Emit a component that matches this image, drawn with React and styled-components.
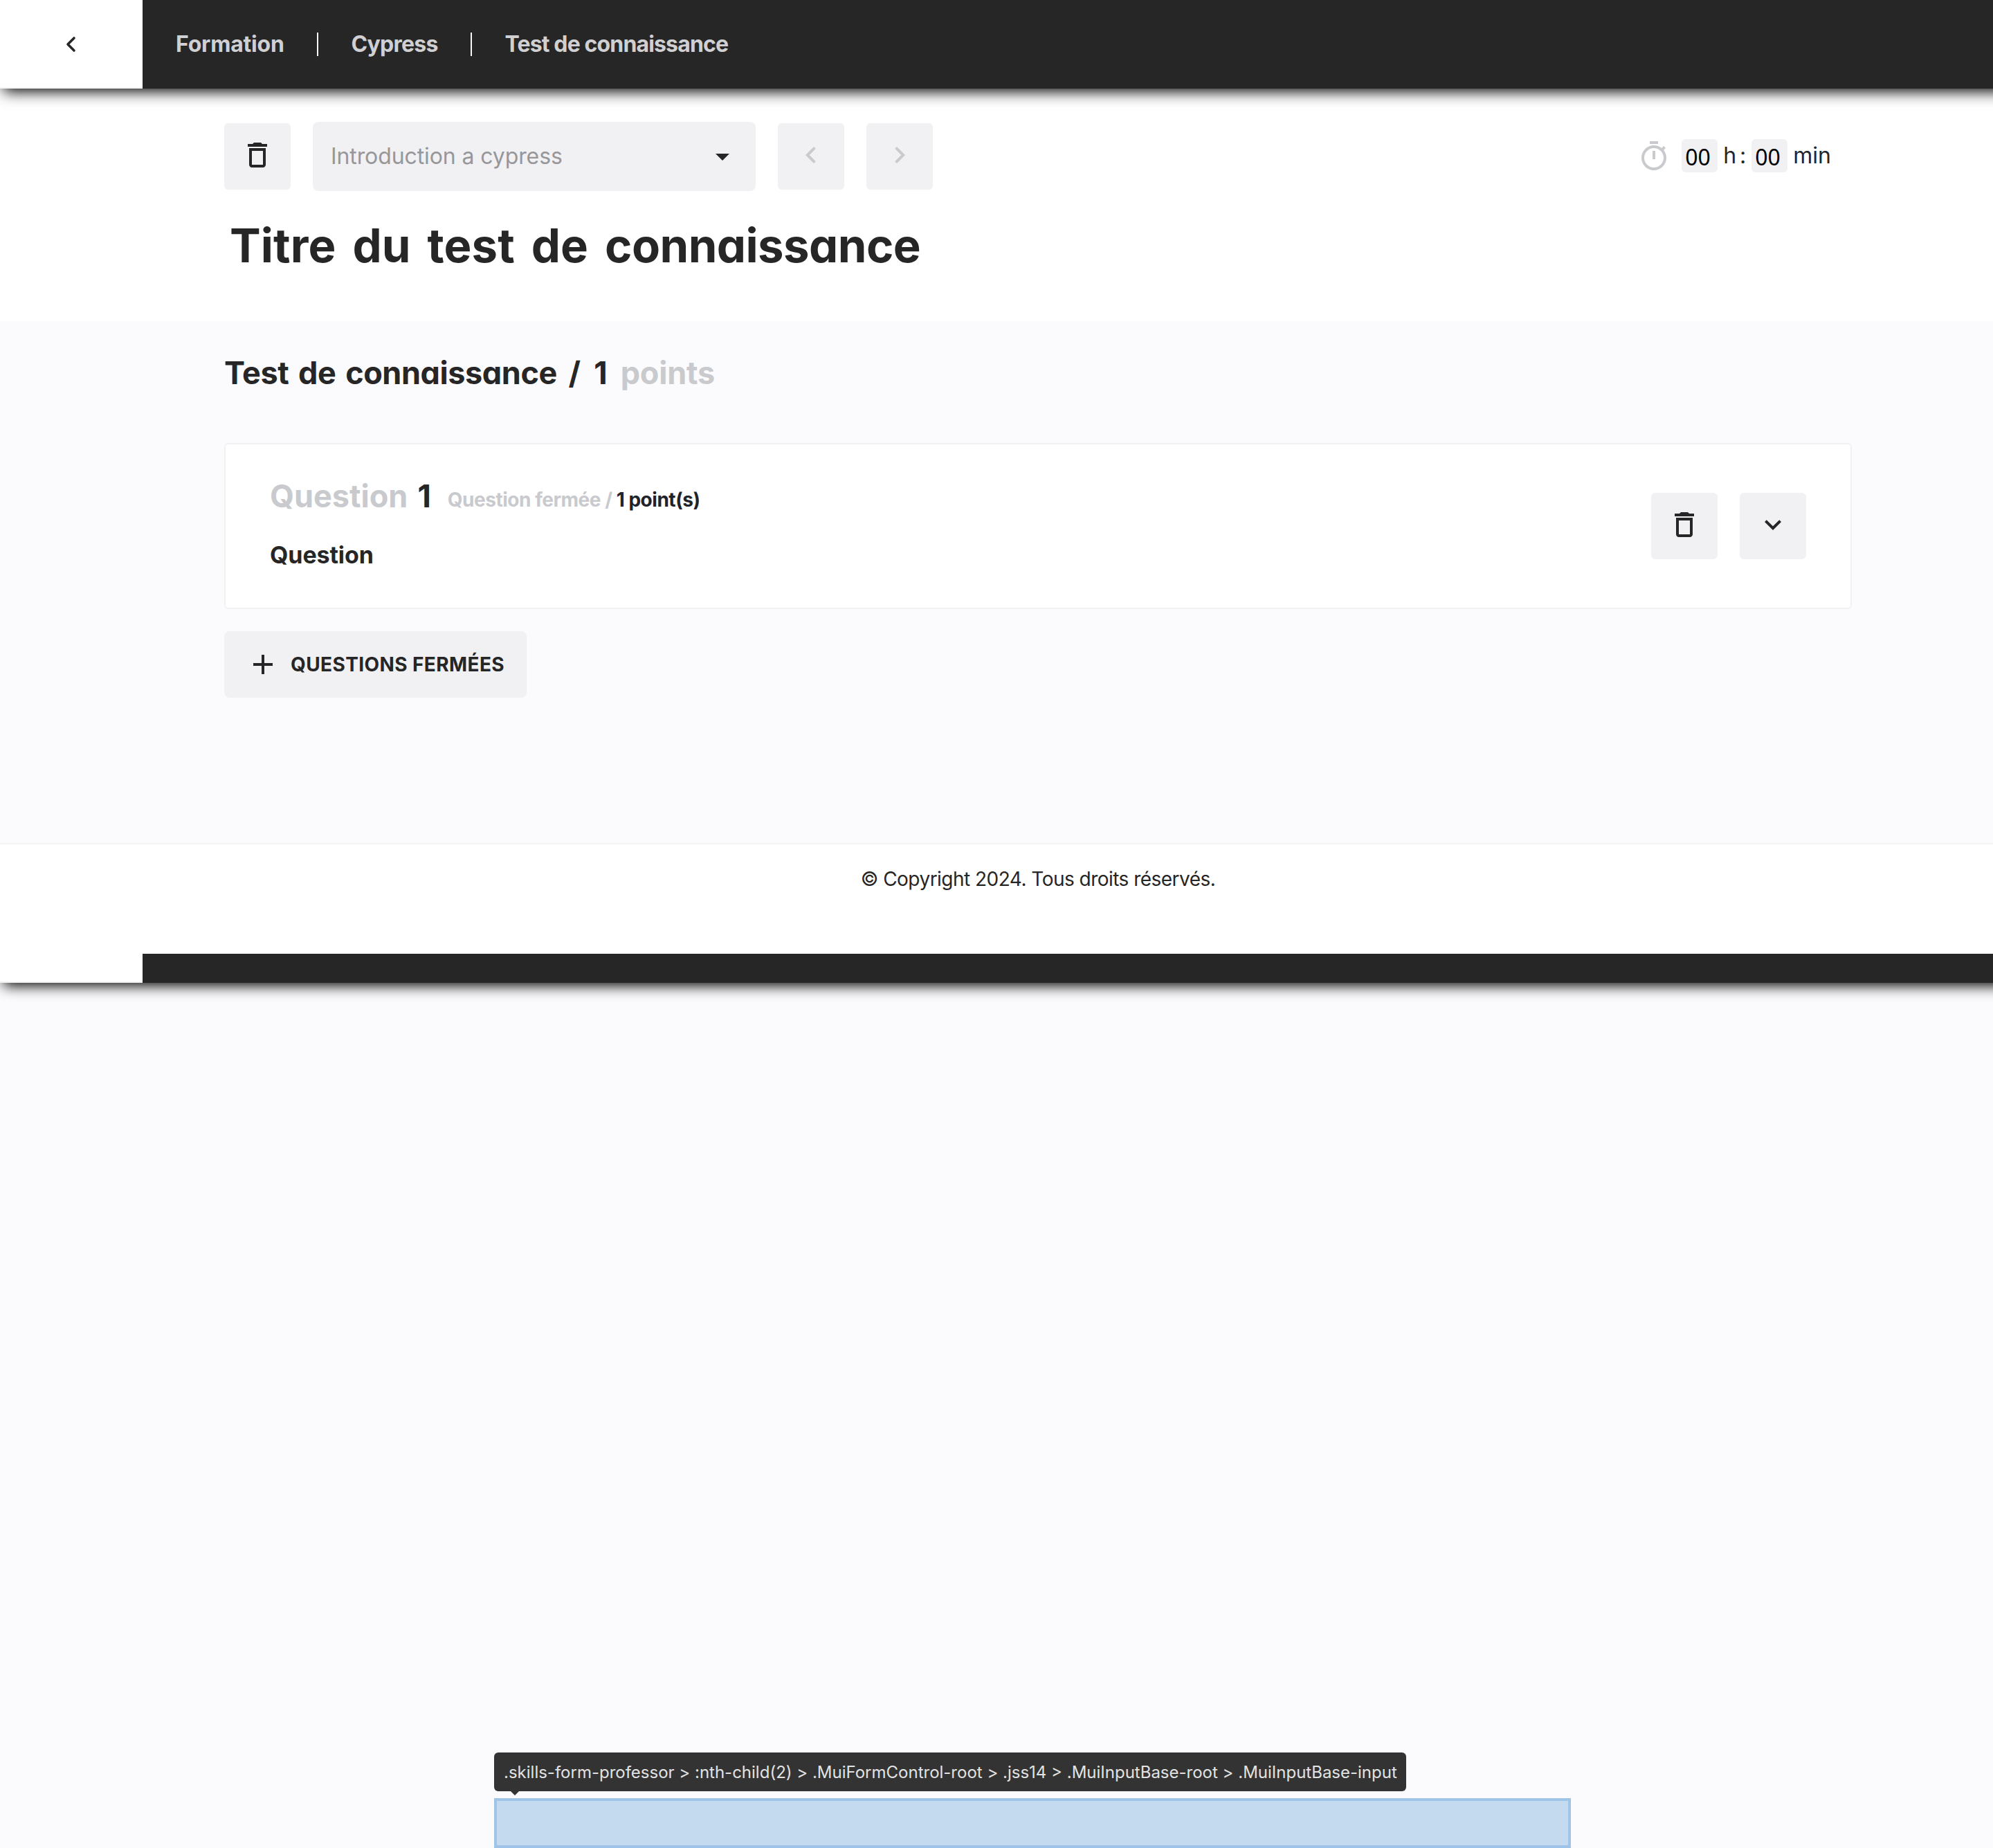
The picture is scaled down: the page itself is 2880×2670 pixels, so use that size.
import React from "react";
import styled, { createGlobalStyle } from "styled-components";

const ink = "#262626";
const muted = "#c9cacd";
const surface = "#f1f1f4";
const canvas = "#fbfbfd";
const textFont = `Inter, "Noto Sans", sans-serif`;

const GlobalStyle = createGlobalStyle`
  *, *::before, *::after { box-sizing: border-box; }
  body { margin: 0; background: ${canvas}; color: ${ink}; font-family: ${textFont}; }
  h1, h2, h3, p { margin: 0; }
  button, input { font-family: inherit; }
`;

const Page = styled.div`
  position: relative;
  width: 2880px;
  height: 2670px;
  overflow: hidden;
  background: ${canvas};
`;

const HeaderBar = styled.header`
  position: relative;
  z-index: 1;
  display: flex;
  height: ${(p) => p.$height}px;
  margin-right: -24px;
  background: ${ink};
  box-shadow: 5px 4px 20px #000;
`;

const BackCell = styled.div`
  display: flex;
  align-items: center;
  justify-content: center;
  width: 206px;
  background: #fff;
  border-bottom: 2px solid #f3f3f4;
`;

const Breadcrumb = styled.nav`
  display: flex;
  align-items: center;
  gap: 47.4px;
  padding-left: 48px;
`;

const Crumb = styled.a`
  color: #d0d0d3;
  font-size: 32px;
  font-weight: 650;
  line-height: 40px;
  letter-spacing: ${(p) => p.$tracking}px;
`;

const CrumbDivider = styled.span`
  width: 2px;
  height: 34px;
  background: #f6f6f8;
`;

const Intro = styled.section`
  height: 336px;
  padding: 48px 204px 0 324px;
  background: #fff;
`;

const Toolbar = styled.div`
  display: flex;
  align-items: center;
  gap: 32px;
`;

const Icon = styled.svg`
  display: block;
  width: 48px;
  height: 48px;
  fill: currentColor;
`;

const IconButton = styled.button`
  display: flex;
  justify-content: center;
  width: 96px;
  height: 96px;
  padding: 22px 0 0;
  border: 0;
  border-radius: 6px;
  background: ${surface};
  color: ${(p) => (p.disabled ? muted : ink)};
`;

const Select = styled.div`
  display: flex;
  align-items: center;
  justify-content: space-between;
  width: 640px;
  height: 100px;
  padding: 0 24px 0 26px;
  border-radius: 8px;
  background: ${surface};
  color: ${ink};
`;

const SelectValue = styled.span`
  margin-top: -1px;
  color: #979799;
  font-size: 32px;
  letter-spacing: -0.1px;
`;

const Timer = styled.div`
  display: flex;
  align-items: center;
  gap: 8px;
  margin: 0 30px 0 auto;
  color: #23262d;
  font-size: 32px;
  line-height: 48px;
`;

const TimerIcon = styled(Icon)`
  margin-right: 8px;
  color: ${muted};
`;

const TimerText = styled.span`
  word-spacing: -4px;
  margin-top: -3px;
`;

const TimerInput = styled.input`
  width: 52px;
  height: 48px;
  margin-top: -2px;
  padding: 2px 0 0 5px;
  border: 0;
  border-radius: 6px;
  background: ${surface};
  color: #000;
  font-family: "Noto Sans", sans-serif;
  font-size: 32px;
`;

const Title = styled.h1`
  margin-top: 36px;
  padding-left: 8px;
  font-size: 67px;
  font-weight: 700;
  line-height: 85px;
  word-spacing: 8px;
  font-feature-settings: "cv11";
`;

const Body = styled.main`
  height: 754px;
  padding: 44px 204px 0 324px;
`;

const SectionTitle = styled.h2`
  font-size: 45px;
  font-weight: 700;
  line-height: 61px;
  word-spacing: 3.5px;
  font-feature-settings: "cv11";
`;

const Tracked = styled.span`
  letter-spacing: ${(p) => p.$tracking}px;
`;

const Muted = styled.span`
  color: ${muted};
`;

const Card = styled.article`
  display: flex;
  justify-content: space-between;
  height: 240px;
  margin-top: 71px;
  padding: 44px 64px 0;
  border: 2px solid #f1f1f3;
  border-radius: 6px;
  background: #fff;
`;

const QuestionHead = styled.div`
  display: flex;
  align-items: center;
  gap: 24px;
`;

const QuestionMeta = styled.p`
  margin-top: 11px;
  color: #202329;
  font-size: 28px;
  font-weight: 650;
  line-height: 36px;
  letter-spacing: -0.48px;
`;

const QuestionTitle = styled.h3`
  margin-top: 33px;
  font-size: 34px;
  font-weight: 700;
  line-height: 44px;
  letter-spacing: -0.1px;
  font-feature-settings: "cv11";
`;

const CardActions = styled.div`
  display: flex;
  gap: 32px;
  padding-top: 26px;
`;

const AddButton = styled.button`
  display: flex;
  align-items: center;
  gap: 16px;
  width: 437px;
  height: 96px;
  margin-top: 32px;
  padding: 0 0 0 32px;
  border: 0;
  border-radius: 8px;
  background: #f1f1f3;
  color: ${ink};
  font-size: 28px;
  font-weight: 650;
  letter-spacing: 0.4px;
  text-transform: uppercase;
  white-space: nowrap;
`;

const Footer = styled.footer`
  position: relative;
  z-index: 2;
  height: 160px;
  padding: 30px 0 0 120px;
  border-top: 2px solid #f3f3f4;
  background: #fff;
  font-size: 28px;
  line-height: 40px;
  letter-spacing: -0.53px;
  text-align: center;
`;

const Highlight = styled.div`
  position: absolute;
  left: 714px;
  top: 2598px;
  width: 1556px;
  height: 72px;
  border: 4px solid #9fc4e7;
  background: #c4daee;
`;

const SelectorTip = styled.div`
  position: absolute;
  left: 714px;
  top: 2532px;
  width: 1318px;
  height: 56px;
  padding-left: 14px;
  border-radius: 6px;
  background: #333;
  color: #e2e2e2;
  font-size: 24px;
  line-height: 57px;
  white-space: nowrap;

  &::after {
    content: "";
    position: absolute;
    left: 24px;
    top: 56px;
    border: 6px solid transparent;
    border-top-color: #333;
    border-bottom: 0;
  }
`;

const paths = {
  trash:
    "M6 19c0 1.1.9 2 2 2h8c1.1 0 2-.9 2-2V7H6v12zM8 9h8v10H8V9zm7.5-5l-1-1h-5l-1 1H5v2h14V4h-3.5z",
  left: "M15.41 7.41L14 6l-6 6 6 6 1.41-1.41L10.83 12z",
  right: "M10 6L8.59 7.41 13.17 12l-4.58 4.59L10 18l6-6z",
  down: "M16.59 8.59L12 13.17 7.41 8.59 6 10l6 6 6-6z",
  caret: "M7 10l5 5 5-5z",
  plus: "M19 13h-6v6h-2v-6H5v-2h6V5h2v6h6v2z",
  timer:
    "M15 1H9v2h6V1zm-4 13h2V8h-2v6zm8.03-6.61l1.42-1.42c-.43-.51-.9-.99-1.41-1.41l-1.42 1.42C16.07 4.74 14.12 4 12 4c-4.97 0-9 4.03-9 9s4.02 9 9 9 9-4.03 9-9c0-2.12-.74-4.07-1.97-5.61zM12 20c-3.87 0-7-3.13-7-7s3.13-7 7-7 7 3.13 7 7-3.13 7-7 7z",
};

function Glyph({ name, as: Base = Icon }) {
  return (
    <Base viewBox="0 0 24 24" aria-hidden="true">
      <path d={paths[name]} />
    </Base>
  );
}

function BackArrow() {
  return (
    <svg width="48" height="48" viewBox="0 0 48 48" fill="none" stroke={ink} strokeWidth="3.6" strokeLinecap="round" strokeLinejoin="round">
      <path d="M28 16 19 25l9 9" />
    </svg>
  );
}

export default function App() {
  return (
    <>
      <GlobalStyle />
      <Page>
        <HeaderBar $height={128}>
          <BackCell>
            <BackArrow />
          </BackCell>
          <Breadcrumb>
            <Crumb $tracking={-0.2}>Formation</Crumb>
            <CrumbDivider />
            <Crumb $tracking={-0.75}>Cypress</Crumb>
            <CrumbDivider />
            <Crumb $tracking={-0.85}>Test de connaissance</Crumb>
          </Breadcrumb>
        </HeaderBar>

        <Intro>
          <Toolbar>
            <IconButton aria-label="Supprimer">
              <Glyph name="trash" />
            </IconButton>
            <Select>
              <SelectValue>Introduction a cypress</SelectValue>
              <Glyph name="caret" />
            </Select>
            <IconButton disabled>
              <Glyph name="left" />
            </IconButton>
            <IconButton disabled>
              <Glyph name="right" />
            </IconButton>
            <Timer>
              <Glyph name="timer" as={TimerIcon} />
              <TimerInput defaultValue="00" />
              <TimerText>h :</TimerText>
              <TimerInput defaultValue="00" />
              <TimerText>min</TimerText>
            </Timer>
          </Toolbar>
          <Title>
            <Tracked $tracking={0.1}>Titre du test de </Tracked>
            <Tracked $tracking={-0.55}>connaissance</Tracked>
          </Title>
        </Intro>

        <Body>
          <SectionTitle>
            <Tracked $tracking={-0.42}>Test de connaissance</Tracked>
            <Tracked $tracking={2.5}> / 1 </Tracked>
            <Tracked $tracking={-0.2}>
              <Muted>points</Muted>
            </Tracked>
          </SectionTitle>
          <Card>
            <div>
              <QuestionHead>
                <SectionTitle>
                  <Muted>Question</Muted> 1
                </SectionTitle>
                <QuestionMeta>
                  <Muted>Question fermée /</Muted> 1 point(s)
                </QuestionMeta>
              </QuestionHead>
              <QuestionTitle>Question</QuestionTitle>
            </div>
            <CardActions>
              <IconButton aria-label="Supprimer">
                <Glyph name="trash" />
              </IconButton>
              <IconButton aria-label="Ouvrir">
                <Glyph name="down" />
              </IconButton>
            </CardActions>
          </Card>
          <AddButton>
            <Glyph name="plus" />
            Questions fermées
          </AddButton>
        </Body>

        <Footer>© Copyright 2024. Tous droits réservés.</Footer>
        <HeaderBar $height={42}>
          <BackCell />
        </HeaderBar>

        <SelectorTip>
          .skills-form-professor &gt; :nth-child(2) &gt; .MuiFormControl-root &gt; .jss14 &gt; .MuiInputBase-root &gt; .MuiInputBase-input
        </SelectorTip>
        <Highlight />
      </Page>
    </>
  );
}
